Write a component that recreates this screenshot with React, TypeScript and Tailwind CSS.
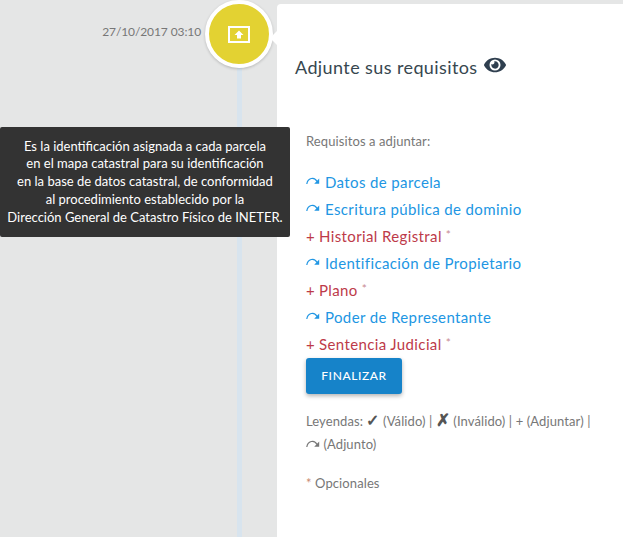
import { FaEye } from "react-icons/fa";

const font = { fontFamily: '"Lato", "Open Sans", sans-serif' };

function Arrow({ className }: { className?: string }) {
  return (
    <svg width="14" height="10" viewBox="0 0 14 10" fill="none" stroke="currentColor" className={className}>
      <path d="M0.8 8C1.6 2.2 8.4 0 11 5.6" strokeWidth="1.2" />
      <path d="M13.2 2.4V7.8H8.2Z" fill="currentColor" stroke="none" />
    </svg>
  );
}

function Attached({ label }: { label: string }) {
  return (
    <li className="flex items-center gap-[5px] h-[27px] text-[#2196e3]">
      <Arrow className="shrink-0 -mt-[4px]" />
      <span className="text-[15px] tracking-[0.38px]">{label}</span>
    </li>
  );
}

function Missing({ label, optional }: { label: string; optional?: boolean }) {
  return (
    <li className="flex items-center gap-[4px] h-[27px] text-[#bd3a49]">
      <span className="text-[15px] w-[9px]">+</span>
      <span className="text-[15px] tracking-[0.38px]">{label}</span>
      {optional && <span className="text-[12px] -mt-1 text-[#c98a92]">*</span>}
    </li>
  );
}

export default function App() {
  return (
    <div className="flex h-[537px] w-[623px] overflow-hidden bg-[#e5e6e6] relative" style={font}>
      {/* timeline */}
      <div className="w-[277px] shrink-0 relative pt-[25px]">
        <div className="absolute left-[237px] top-[60px] bottom-0 w-[5px] bg-[#d8e4ee]" />
        <div className="flex items-start">
          <span className="w-[201px] text-right text-[12px] leading-[14px] tracking-[-0.1px] text-[#777]">27/10/2017 03:10</span>
        </div>
        <div className="absolute left-[205px] top-0 flex size-[68px] items-center justify-center rounded-full border-[4px] border-white bg-[#e3d232] shadow-[0_1px_3px_rgba(0,0,0,0.2)]">
          <div className="flex h-[17px] w-[22px] items-center justify-center border-2 border-white">
            <svg width="10" height="9" viewBox="0 0 10 9" fill="white">
              <path d="M5 0.5L9.5 5H7V8.5H3V5H0.5Z" />
            </svg>
          </div>
        </div>
      </div>

      {/* card */}
      <div className="mt-[4px] flex-1 rounded-tl-[4px] bg-white pl-[29px] pr-[18px] pt-[52px] relative">
        <div className="absolute -left-[7px] top-[27px] size-0 border-y-[7px] border-r-[7px] border-y-transparent border-r-white" />
        <h2 className="-ml-[11px] flex items-start gap-[6px] text-[18px] leading-[22px] tracking-[0.4px] text-[#37474f]">
          Adjunte sus requisitos
          <FaEye className="size-[22px] -mt-[2px] text-[#2f3f4f]" />
        </h2>
        <p className="mt-[55px] text-[13px] leading-[16px] tracking-[0.1px] text-[#777]">Requisitos a adjuntar:</p>
        <ul className="mt-[20px]">
          <Attached label="Datos de parcela" />
          <Attached label="Escritura pública de dominio" />
          <Missing label="Historial Registral" optional />
          <Attached label="Identificación de Propietario" />
          <Missing label="Plano" optional />
          <Attached label="Poder de Representante" />
          <Missing label="Sentencia Judicial" optional />
        </ul>
        <button className="mt-0 h-[36px] w-[96px] rounded-[3px] bg-[#1683c9] text-[12px] font-medium tracking-[0.6px] text-white shadow-[0_2px_4px_rgba(0,0,0,0.3)]">
          FINALIZAR
        </button>
        <p className="mt-[16px] text-[13px] leading-[23px] tracking-[0.1px] text-[#777]">
          Leyendas: <span className="text-[#555] text-[16px] font-bold leading-none">✓</span> (Válido) | <span className="text-[#555] text-[17px] font-bold leading-none">✗</span> (Inválido) | + (Adjuntar) |
          <br />
          <Arrow className="inline-block align-[0px]" /> (Adjunto)
        </p>
        <p className="mt-[19px] text-[13px] leading-[16px] tracking-[0.1px] text-[#777]">
          <span className="text-[#c98a72]">*</span> Opcionales
        </p>
      </div>

      {/* tooltip */}
      <div className="absolute left-0 top-[127px] flex h-[110px] w-[290px] items-center justify-center rounded-[2px] bg-[#333333] text-center text-[13px] leading-[17.8px] text-white">
        <p>
          Es la identificación asignada a cada parcela
          <br />
          en el mapa catastral para su identificación
          <br />
          en la base de datos catastral, de conformidad
          <br />
          al procedimiento establecido por la
          <br />
          Dirección General de Catastro Físico de INETER.
        </p>
      </div>
    </div>
  );
}
